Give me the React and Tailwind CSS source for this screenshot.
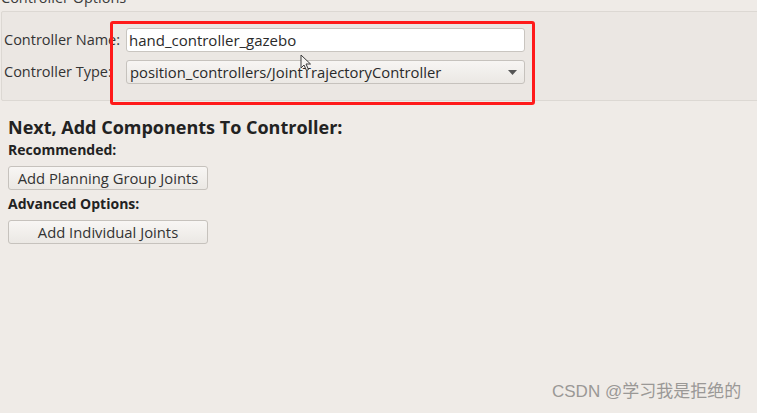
import React from "react";

export default function App() {
  const font = { fontFamily: '"Open Sans", "Noto Sans", sans-serif' };
  return (
    <div className="relative w-[757px] h-[413px] overflow-hidden bg-[#efebe7] text-[#3c3c3c]" style={font}>
      {/* group title cut off */}
      <div className="absolute left-[1px] top-[-11px] text-[14.5px] leading-[18px] text-[#3c3c3c]">Controller Options</div>

      <div className="pt-[11px]">
        <div className="ml-[1px] w-[780px] h-[90px] border border-[#dcd8d3] rounded-[2px] bg-[#ebe7e3] pt-[16px] pl-[2px]">
          <div className="flex items-center h-[24px]">
            <div className="w-[122px] text-[14.5px] leading-[18px] text-[#333]">Controller Name:</div>
            <div className="w-[399px] h-[24px] bg-white border border-[#c9c5c0] rounded-[3px] flex items-center px-[2px] text-[15px] text-[#2a2a2a]">
              hand_controller_gazebo
            </div>
          </div>
          <div className="flex items-center h-[24px] mt-[8px]">
            <div className="w-[122px] text-[14.5px] leading-[18px] text-[#333]">Controller Type:</div>
            <div className="w-[399px] h-[24px] bg-gradient-to-b from-[#f7f5f3] to-[#ebe8e4] border border-[#c6c2bd] rounded-[3px] flex items-center justify-between pl-[3px] pr-[7px] text-[14.8px] text-[#2a2a2a]">
              <span>position_controllers/JointTrajectoryController</span>
              <svg width="9" height="5" viewBox="0 0 9 5"><path d="M0 0H9L4.5 5Z" fill="#555" /></svg>
            </div>
          </div>
        </div>
      </div>

      {/* red highlight */}
      <div className="absolute left-[110px] top-[21px] w-[425px] h-[84px] border-[3px] border-[#ff1a1a] rounded-[3px]" />

      {/* mouse cursor */}
      <svg className="absolute left-[300px] top-[54px]" width="12" height="18" viewBox="0 0 12 18">
        <path d="M1 1 L1 14 L4 11 L6.5 16.5 L8.5 15.5 L6 10 L10.5 10 Z" fill="#f4f2ef" stroke="#3a3a3a" strokeWidth="1" />
      </svg>

      <div className="pl-[8px] pt-[15px]">
        <div className="text-[18px] font-bold leading-[22px] text-[#222]">Next, Add Components To Controller:</div>
        <div className="text-[14px] font-bold leading-[18px] mt-[3px] text-[#222]">Recommended:</div>
        <button className="mt-[7px] w-[200px] h-[24px] border border-[#c6c2bd] rounded-[3px] bg-gradient-to-b from-[#f8f6f4] to-[#ebe8e4] text-[14.8px] text-[#333] flex items-center justify-center">
          Add Planning Group Joints
        </button>
        <div className="text-[14px] font-bold leading-[18px] mt-[5px] text-[#222]">Advanced Options:</div>
        <button className="mt-[7px] w-[200px] h-[24px] border border-[#c6c2bd] rounded-[3px] bg-gradient-to-b from-[#f8f6f4] to-[#ebe8e4] text-[14.8px] text-[#333] flex items-center justify-center">
          Add Individual Joints
        </button>
      </div>

      <div
        className="absolute left-[552px] top-[381px] text-[17px] leading-[22px] text-[#9a9896]"
        style={{ fontFamily: '"Liberation Sans", "Noto Sans CJK SC", sans-serif' }}
      >
        CSDN @学习我是拒绝的
      </div>
    </div>
  );
}
